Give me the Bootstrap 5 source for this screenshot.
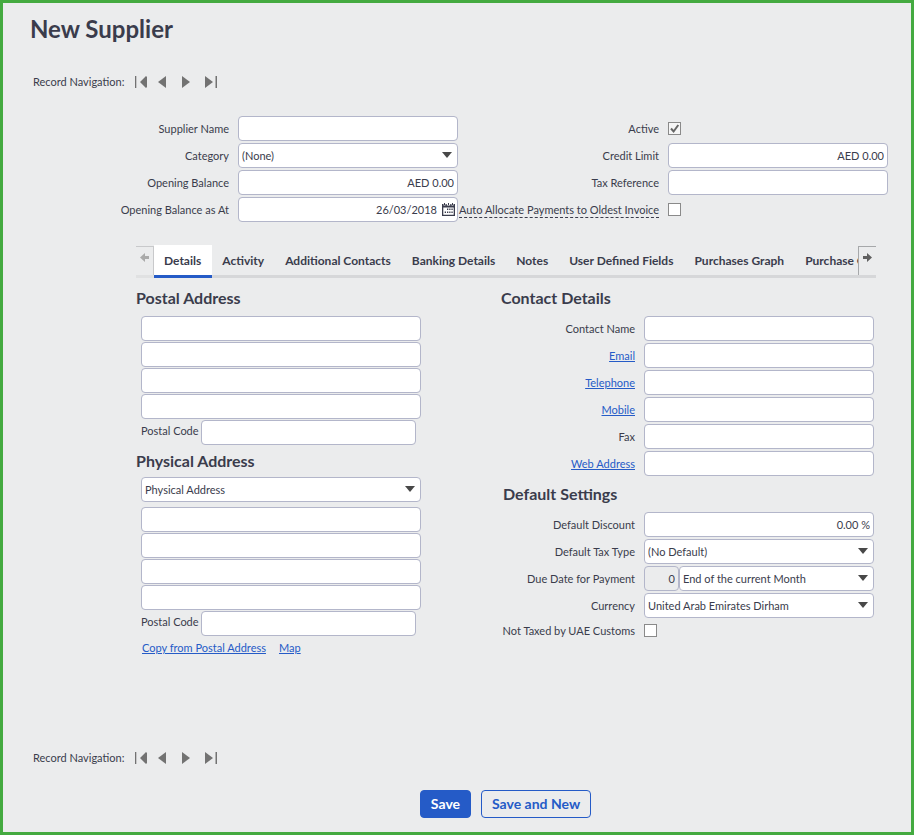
<!DOCTYPE html>
<html lang="en">
<head>
<meta charset="utf-8">
<meta name="viewport" content="width=device-width, initial-scale=1">
<title>New Supplier</title>
<link href="https://cdn.jsdelivr.net/npm/bootstrap@5.3.0/dist/css/bootstrap.min.css" rel="stylesheet">
<style>
:root { --ink: #3a3c4c; --blue: #255bc7; --edge: #b3b6ca; --panel: #ebeced; }
body { background: var(--panel); color: var(--ink); font: 11px/16px Lato, "Liberation Sans", sans-serif; }
a { color: var(--blue); }
.page { min-height: 100vh; border: 3px solid #44aa40; padding: 11px 23px 14px 25px; }
h1 { font-size: 24px; line-height: 30px; font-weight: 700; margin: 0; padding-left: 2px; }
h2 { font-size: 16px; line-height: 20px; font-weight: 700; margin: 0; }
.record-nav { padding-left: 5px; }
.record-nav.upper { margin: 30px 0 26px; }
.record-nav .steps { gap: 10px; margin-left: 9px; }
.step { width: 14px; height: 16px; padding: 0; border: 0; background: none; line-height: 0; }
.step svg { width: 14px; height: 14px; fill: #727272; }
.fields { display: grid; grid-template-columns: minmax(0, 1fr) 220px; column-gap: 9px; grid-auto-rows: 25px; row-gap: 2px; align-items: center; }
.fields > label, .fields > a { justify-self: end; text-align: right; white-space: nowrap; }
.fields.contact { grid-template-columns: minmax(0, 1fr) 230px; }
.fields.defaults { grid-template-rows: repeat(4, 25px) 21px; }
.form-control, .form-select { height: 25px; min-height: 25px; font-size: 11px; line-height: 16px; color: var(--ink); border: 1px solid var(--edge); border-radius: 4px; padding: 3px; background-color: #fff; }
.form-control:disabled { background-color: var(--panel); }
.form-select { padding-right: 20px; background-image: url("data:image/svg+xml,%3Csvg xmlns='http://www.w3.org/2000/svg' viewBox='0 0 10 6'%3E%3Cpath d='M0 0h10L5 6z' fill='%23484848'/%3E%3C/svg%3E"); background-size: 10px 6px; background-position: right 5px top 8px; }
.tick { appearance: none; width: 13px; height: 13px; margin: 0; border: 1px solid #8a8a8a; background: #fff; }
.tick:checked { background: #f6f6f6 url("data:image/svg+xml,%3Csvg xmlns='http://www.w3.org/2000/svg' viewBox='0 0 11 11'%3E%3Cpath d='M2 5.5l2.6 3L9.3 2' fill='none' stroke='%23666' stroke-width='2'/%3E%3C/svg%3E") center / 11px 11px no-repeat; }
.hint { border-bottom: 1px dashed var(--ink); line-height: 15px; }
.dated .form-control { padding-right: 20px; }
.calendar { position: absolute; right: 3px; top: 6px; width: 13px; height: 13px; padding: 0; border: 0; background: none; line-height: 0; }
.calendar svg { display: block; }
.tabbed { margin: 23px 12px 0 108px; }
.tabstrip { height: 33px; }
.tabstrip .nav { min-width: 0; overflow: hidden; }
.tabstrip .nav-link { height: 33px; padding: 1px 11px 0 10px; border: 0; border-bottom: 3px solid #d6d7d9; border-radius: 0; color: var(--ink); font-size: 12px; line-height: 30px; font-weight: 700; white-space: nowrap; background: none; }
.tabstrip .nav-link.active { background: #fff; border-color: var(--blue); color: var(--ink); }
.scroller { flex: 0 0 18px; height: 33px; padding: 1px 0 0; border: 0; border-bottom: 3px solid #d6d7d9; background: linear-gradient(#a6a8aa, #a6a8aa) 0 1px / 100% 1px no-repeat; line-height: 0; }
.scroller svg { width: 9px; height: 9px; fill: #606060; }
.scroller span { display: flex; align-items: center; justify-content: center; height: 29px; padding-bottom: 6px; border-left: 1px solid #a6a8aa; }
.scroller.back { background-image: linear-gradient(#c8c9cb, #c8c9cb); border-color: #e0e1e2; }
.scroller.back span { border-left: 0; border-right: 1px solid #c8c9cb; }
.scroller.back svg { fill: #aaa; }
.panes { margin-top: 10px; }
.address { width: 285px; padding-left: 5px; }
.address .lines { display: grid; gap: 1px; }
.address .form-select { margin: 6px 0 5px; }
.second { margin-top: 6px; }
.postcode { gap: 2px; margin: 1px 5px 0 0; }
.postcode label { padding-top: 3px; }
.copy-links { gap: 13px; padding: 4px 0 0 1px; }
.contact-col { flex: 0 0 375px; padding-right: 2px; }
.settings-title { margin: 8px 0 0 2px; }
.days { flex: 0 0 35px; width: 35px; }
.actions { gap: 10px; padding-left: 95px; }
.actions .btn { height: 28px; padding: 0 10px; font-size: 14px; line-height: 26px; font-weight: 700; border: 1px solid var(--blue); border-radius: 4px; color: var(--blue); }
.actions .btn-primary { background: var(--blue); color: #fff; }
</style>
</head>
<body>
<svg class="d-none" aria-hidden="true">
  <symbol id="first" viewBox="0 0 14 14"><path d="M2 1h1.300v12H2zM14 2v10l-1 1-6-6 6-6z"/></symbol>
  <symbol id="prev" viewBox="0 0 14 14"><path d="M9 1v12L1 7z"/></symbol>
  <symbol id="next" viewBox="0 0 14 14"><path d="M1 1v12l8-6z"/></symbol>
  <symbol id="last" viewBox="0 0 14 14"><path d="M0 1v12l8-6zM10.500 1H12v12h-1.500z"/></symbol>
</svg>
<main class="page d-flex flex-column">
  <h1>New Supplier</h1>
  <nav class="record-nav upper d-flex align-items-center" aria-label="Record navigation, top">
    <span>Record Navigation:</span>
    <div class="steps d-flex">
      <button class="step" type="button" aria-label="First"><svg><use href="#first"/></svg></button>
      <button class="step" type="button" aria-label="Previous"><svg><use href="#prev"/></svg></button>
      <button class="step" type="button" aria-label="Next"><svg><use href="#next"/></svg></button>
      <button class="step" type="button" aria-label="Last"><svg><use href="#last"/></svg></button>
    </div>
  </nav>
  <form class="d-flex flex-column flex-grow-1">
    <div class="row g-0">
      <div class="col-6"><div class="fields">
        <label for="name">Supplier Name</label><input class="form-control" id="name">
        <label for="category">Category</label><select class="form-select" id="category"><option>(None)</option></select>
        <label for="balance">Opening Balance</label><input class="form-control text-end" id="balance" value="AED 0.00">
        <label for="asat">Opening Balance as At</label>
        <div class="dated position-relative"><input class="form-control text-end" id="asat" value="26/03/2018">
          <button class="calendar" type="button" aria-label="Pick a date"><svg width="13" height="13" viewBox="0 0 13 13"><path fill="#3a3c4c" fill-rule="evenodd" d="M0 1h1.500v1.500h2V1h1.300v1.500h3.400V1h1.300v1.500h2V1H13v12H0zM1.300 4.500v7.200h10.400V4.500z"/><path fill="#3a3c4c" d="M2 0h1v2H2zM6 0h1v2H6zM10 0h1v2h-1zM5 5.500h1.300v1.600H5zM7.200 5.500h1.300v1.600H7.200zM9.400 5.500h1.300v1.600H9.400zM2.700 8.500h1.300v1.600H2.700zM5 8.500h1.300v1.600H5zM7.200 8.500h1.300v1.600H7.200zM9.400 8.500h1.300v1.600H9.400z"/></svg></button></div>
      </div></div>
      <div class="col-6"><div class="fields">
        <label for="active">Active</label><input class="tick" type="checkbox" id="active" checked>
        <label for="credit">Credit Limit</label><input class="form-control text-end" id="credit" value="AED 0.00">
        <label for="taxref">Tax Reference</label><input class="form-control" id="taxref">
        <label for="auto" class="hint">Auto Allocate Payments to Oldest Invoice</label><input class="tick" type="checkbox" id="auto">
      </div></div>
    </div>

    <div class="tabbed">
      <div class="tabstrip d-flex">
        <button class="scroller back" type="button" aria-label="Scroll tabs left"><span><svg viewBox="0 0 9 9"><path d="M0 4.500L5 0v3h4v3H5v3z"/></svg></span></button>
        <div class="nav flex-nowrap flex-grow-1" role="tablist">
          <button class="nav-link active" type="button" role="tab">Details</button>
          <button class="nav-link" type="button" role="tab">Activity</button>
          <button class="nav-link" type="button" role="tab">Additional Contacts</button>
          <button class="nav-link" type="button" role="tab">Banking Details</button>
          <button class="nav-link" type="button" role="tab">Notes</button>
          <button class="nav-link" type="button" role="tab">User Defined Fields</button>
          <button class="nav-link" type="button" role="tab">Purchases Graph</button>
          <button class="nav-link" type="button" role="tab">Purchase Orders</button>
        </div>
        <button class="scroller" type="button" aria-label="Scroll tabs right"><span><svg viewBox="0 0 9 9"><path d="M9 4.500L4 0v3H0v3h4v3z"/></svg></span></button>
      </div>

      <div class="panes d-flex justify-content-between">
        <section>
          <h2>Postal Address</h2>
          <div class="address pt-2">
            <div class="lines">
              <input class="form-control" aria-label="Postal address line 1">
              <input class="form-control" aria-label="Postal address line 2">
              <input class="form-control" aria-label="Postal address line 3">
              <input class="form-control" aria-label="Postal address line 4">
            </div>
            <div class="postcode d-flex"><label for="pc1" class="text-nowrap">Postal Code</label><input class="form-control" id="pc1"></div>
          </div>
          <h2 class="second">Physical Address</h2>
          <div class="address">
            <select class="form-select" aria-label="Physical address"><option>Physical Address</option></select>
            <div class="lines">
              <input class="form-control" aria-label="Physical address line 1">
              <input class="form-control" aria-label="Physical address line 2">
              <input class="form-control" aria-label="Physical address line 3">
              <input class="form-control" aria-label="Physical address line 4">
            </div>
            <div class="postcode d-flex"><label for="pc2" class="text-nowrap">Postal Code</label><input class="form-control" id="pc2"></div>
            <div class="copy-links d-flex"><a href="#">Copy from Postal Address</a><a href="#">Map</a></div>
          </div>
        </section>
        <section class="contact-col">
          <h2>Contact Details</h2>
          <div class="fields contact pt-2">
            <label for="contact">Contact Name</label><input class="form-control" id="contact">
            <a href="#">Email</a><input class="form-control" aria-label="Email">
            <a href="#">Telephone</a><input class="form-control" aria-label="Telephone">
            <a href="#">Mobile</a><input class="form-control" aria-label="Mobile">
            <label for="fax">Fax</label><input class="form-control" id="fax">
            <a href="#">Web Address</a><input class="form-control" aria-label="Web Address">
          </div>
          <h2 class="settings-title">Default Settings</h2>
          <div class="fields contact defaults pt-2">
            <label for="discount">Default Discount</label><input class="form-control text-end" id="discount" value="0.00 %">
            <label for="taxtype">Default Tax Type</label><select class="form-select" id="taxtype"><option>(No Default)</option></select>
            <label for="due">Due Date for Payment</label>
            <div class="d-flex"><input class="form-control text-end days" aria-label="Days" value="0" disabled><select class="form-select" id="due"><option>End of the current Month</option></select></div>
            <label for="currency">Currency</label><select class="form-select" id="currency"><option>United Arab Emirates Dirham</option></select>
            <label for="customs">Not Taxed by UAE Customs</label><input class="tick" type="checkbox" id="customs">
          </div>
        </section>
      </div>
    </div>

    <nav class="record-nav d-flex align-items-center mt-auto mb-4" aria-label="Record navigation, bottom">
      <span>Record Navigation:</span>
      <div class="steps d-flex">
        <button class="step" type="button" aria-label="First"><svg><use href="#first"/></svg></button>
        <button class="step" type="button" aria-label="Previous"><svg><use href="#prev"/></svg></button>
        <button class="step" type="button" aria-label="Next"><svg><use href="#next"/></svg></button>
        <button class="step" type="button" aria-label="Last"><svg><use href="#last"/></svg></button>
      </div>
    </nav>
    <div class="actions d-flex justify-content-center">
      <button class="btn btn-primary" type="submit">Save</button>
      <button class="btn" type="button">Save and New</button>
    </div>
  </form>
</main>
<script src="https://cdn.jsdelivr.net/npm/bootstrap@5.3.0/dist/js/bootstrap.bundle.min.js"></script>
</body>
</html>
